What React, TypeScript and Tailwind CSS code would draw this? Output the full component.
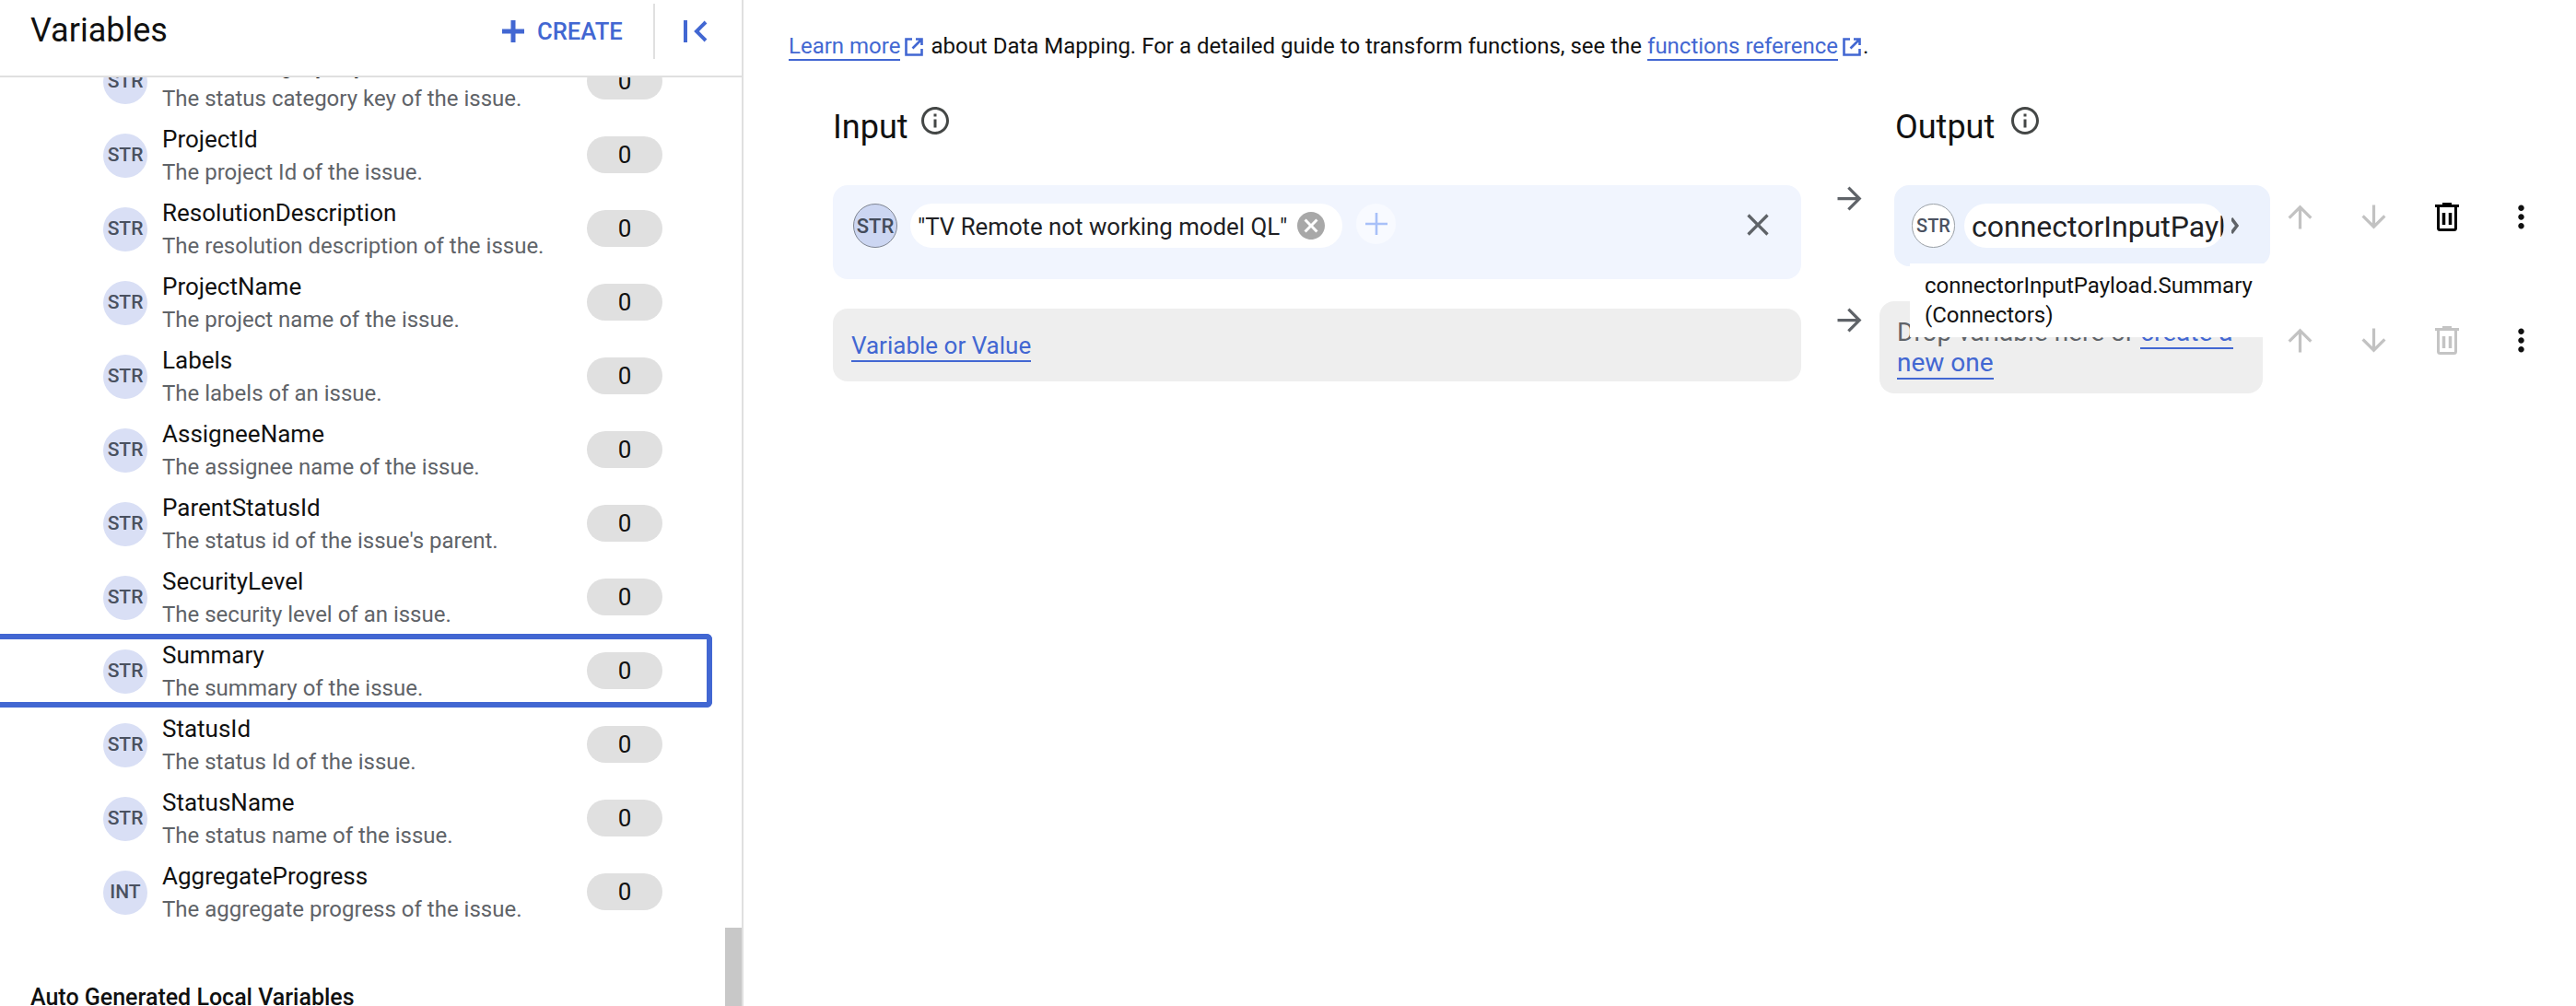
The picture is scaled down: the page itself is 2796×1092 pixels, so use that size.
import React from "react";
import { MdOutlineInfo, MdClose, MdCancel, MdMoreVert, MdArrowForward, MdArrowUpward, MdArrowDownward } from "react-icons/md";

const rows: [string, string, string][] = [
  ["STR", "StatusCategoryKey", "The status category key of the issue."],
  ["STR", "ProjectId", "The project Id of the issue."],
  ["STR", "ResolutionDescription", "The resolution description of the issue."],
  ["STR", "ProjectName", "The project name of the issue."],
  ["STR", "Labels", "The labels of an issue."],
  ["STR", "AssigneeName", "The assignee name of the issue."],
  ["STR", "ParentStatusId", "The status id of the issue's parent."],
  ["STR", "SecurityLevel", "The security level of an issue."],
  ["STR", "Summary", "The summary of the issue."],
  ["STR", "StatusId", "The status Id of the issue."],
  ["STR", "StatusName", "The status name of the issue."],
  ["INT", "AggregateProgress", "The aggregate progress of the issue."],
];

function Trash({ className }: { className: string }) {
  return (
    <svg viewBox="0 0 26 31" className={className} fill="none" stroke="currentColor">
      <path d="M0 3.5h26" strokeWidth="3" />
      <path d="M8 1.5h10" strokeWidth="3" />
      <path d="M3.5 4v23.5a2 2 0 0 0 2 2h15a2 2 0 0 0 2-2V4" strokeWidth="3" />
      <path d="M9.5 11v13M16.5 11v13" strokeWidth="3.5" />
    </svg>
  );
}

function Plus({ className }: { className: string }) {
  return (
    <svg viewBox="0 0 24 24" className={className} fill="currentColor">
      <path d="M9.5 0h5v9.5H24v5h-9.5V24h-5v-9.5H0v-5h9.5z" />
    </svg>
  );
}

function VarRow({ type, name, desc, focus }: { type: string; name: string; desc: string; focus: boolean }) {
  return (
    <div className="relative flex h-[80px] w-[773px] items-center pl-[112px]">
      <div className="mt-[1px] flex h-[48px] w-[48px] shrink-0 items-center justify-center rounded-full bg-[#d9dff5] text-[21px] font-medium text-[#4a5160]">
        {type}
      </div>
      <div className="ml-[16px] mt-[2px] w-[461px] shrink-0">
        <div className="text-[26px] leading-[36px] text-[#111111]">{name}</div>
        <div className="text-[24px] leading-[36px] text-[#5f6368]">{desc}</div>
      </div>
      <div className="flex h-[40px] w-[82px] shrink-0 items-center justify-center rounded-[20px] bg-[#e0e0e0] text-[26px] text-[#111111]">
        0
      </div>
      {focus && <div className="absolute inset-0 rounded-r-[6px] border-y-[6px] border-r-[6px] border-[#4267d2]" />}
    </div>
  );
}

function Ext() {
  return (
    <svg viewBox="0 0 20 20" className="mx-[5px] inline-block h-[20px] w-[20px] align-[-3px] text-[#4267d2]" fill="none" stroke="currentColor" strokeWidth="2.6">
      <path d="M8 1.5H1.5v17h17V12" />
      <path d="M12 1.5h6.5V8M18 2L8.5 11.5" />
    </svg>
  );
}

function IconColumn({ dim, h }: { dim: boolean; h: string }) {
  return (
    <div className={`flex ${h} items-center`}>
      <div className="flex w-[80px] justify-center text-[#c2c2c2]"><MdArrowUpward className="h-[39px] w-[39px]" /></div>
      <div className="flex w-[80px] justify-center text-[#c2c2c2]"><MdArrowDownward className="h-[39px] w-[39px]" /></div>
      <div className="flex w-[80px] justify-center">
        <Trash className={`h-[31px] w-[26px] ${dim ? "text-[#c4c4c4]" : "text-[#000000]"}`} />
      </div>
      <div className="flex w-[80px] justify-center text-[#111111]"><MdMoreVert className="h-[39px] w-[39px]" /></div>
    </div>
  );
}

export default function App() {
  return (
    <div className="flex h-[1092px] w-[2796px] overflow-hidden bg-white font-['Roboto',sans-serif]">
      <aside className="relative flex h-full w-[807px] shrink-0 flex-col overflow-hidden border-r-2 border-[#e0e0e0]">
        <header className="relative z-10 flex h-[84px] shrink-0 items-start border-b-[2px] border-[#e0e0e0] bg-white pl-[33px]">
          <h1 className="mt-[12px] w-[512px] text-[36px] leading-[42px] text-[#111111]">Variables</h1>
          <div className="mt-[22px] flex h-[24px] items-center text-[#4267d2]">
            <Plus className="h-[24px] w-[24px]" />
            <span className="ml-[14px] text-[25.6px] font-medium leading-[32px]">CREATE</span>
          </div>
          <div className="ml-[33px] mt-[4px] h-[60px] w-[2px] bg-[#e0e0e0]" />
          <svg viewBox="0 0 26 24" className="ml-[31px] mt-[22px] h-[24px] w-[26px] text-[#4267d2]" fill="none" stroke="currentColor" strokeWidth="4">
            <path d="M2 0v24" />
            <path d="M24 2L14 12l10 10" />
          </svg>
        </header>
        <div className="mt-[-36px] flex flex-col">
          {rows.map((r) => (
            <VarRow key={r[1]} type={r[0]} name={r[1]} desc={r[2]} focus={r[1] === "Summary"} />
          ))}
          <div className="ml-[33px] mt-[59px] text-[25px] font-medium leading-[32px] text-[#111111]">
            Auto Generated Local Variables
          </div>
        </div>
        <div className="absolute right-0 top-[1007px] h-[85px] w-[18px] bg-[#c8c8c8]" />
      </aside>

      <main className="relative min-w-0 flex-1 pl-[49px]">
        <p className="mt-[32px] text-[24px] leading-[36px] text-[#111111]">
          <a className="border-b-2 border-[#4267d2] text-[#4267d2]">Learn more</a>
          <Ext />
          <span className="ml-[3px]">about Data Mapping. For a detailed guide to transform functions, see the </span>
          <a className="border-b-2 border-[#4267d2] text-[#4267d2]">functions reference</a>
          <Ext />
          <span className="ml-[-3px]">.</span>
        </p>

        <div className="ml-[48px] mt-[47px] flex h-[46px] items-start">
          <div className="flex w-[1153px] items-start">
            <span className="text-[36px] leading-[46px] text-[#111111]">Input</span>
            <MdOutlineInfo className="ml-[11px] mt-[-2px] h-[36px] w-[36px] text-[#444746]" />
          </div>
          <div className="flex items-start">
            <span className="text-[36px] leading-[46px] text-[#111111]">Output</span>
            <MdOutlineInfo className="ml-[15px] mt-[-2px] h-[36px] w-[36px] text-[#444746]" />
          </div>
        </div>

        <div className="ml-[48px] mt-[40px] flex h-[126px] items-start">
          <div className="relative flex h-[102px] w-[1051px] shrink-0 items-start rounded-[16px] bg-[#f1f5fe] pl-[22px] pt-[20px]">
            <div className="flex h-[48px] w-[48px] shrink-0 items-center justify-center rounded-full border border-[#7f8592] bg-[#ccd6f2] text-[22px] font-medium text-[#444c5c]">STR</div>
            <div className="ml-[14px] flex h-[48px] w-[469px] shrink-0 items-center rounded-full bg-white pl-[8px]">
              <span className="mt-[2px] w-[412px] whitespace-nowrap text-[25.8px] text-[#202124]">"TV Remote not working model QL"</span>
              <MdCancel className="ml-[-3px] h-[36px] w-[36px] text-[#a8a8a8]" />
            </div>
            <div className="ml-[15px] flex h-[44px] w-[43px] items-center justify-center rounded-full bg-[#f8faff]">
              <svg viewBox="0 0 24 24" className="h-[24px] w-[24px] text-[#a8c0f8]" fill="none" stroke="currentColor" strokeWidth="2.6">
                <path d="M12 0v24M0 12h24" />
              </svg>
            </div>
            <MdClose className="ml-[373px] mt-[3px] h-[40px] w-[40px] text-[#5f6368]" />
          </div>
          <div className="w-[85px] shrink-0 pl-[33px]">
            <MdArrowForward className="mt-[-5px] h-[39px] w-[39px] text-[#5f6368]" />
          </div>
          <div className="w-[416px] shrink-0">
            <div className="ml-[16px] flex h-[88px] w-[408px] items-start rounded-[16px] bg-[#ecf2fd] pl-[19px] pt-[20px]">
              <div className="flex h-[48px] w-[47px] shrink-0 items-center justify-center rounded-full border border-[#9aa0a6] bg-white text-[20px] font-medium text-[#4a5160]">STR</div>
              <div className="ml-[10px] flex h-[48px] w-[282px] shrink-0 items-center overflow-hidden rounded-full bg-white pl-[8px]">
                <span className="mt-[2px] whitespace-nowrap text-[32px] text-[#202124]">connectorInputPayload.Summary</span>
              </div>
              <svg viewBox="0 0 8 20" className="ml-[8px] mt-[14px] h-[20px] w-[8px] text-[#5f6368]" fill="none" stroke="currentColor" strokeWidth="3.5">
                <path d="M0 2l6 8-6 8" />
              </svg>
            </div>
          </div>
          <IconColumn dim={false} h="h-[68px]" />
        </div>

        <div className="ml-[48px] flex items-start">
          <div className="mt-[8px] flex h-[79px] w-[1051px] shrink-0 items-center rounded-[16px] bg-[#eeeeee] pl-[20px] text-[26px] text-[#4267d2]">
            <a className="mt-[2px] border-b-2 border-[#4267d2] leading-[32px]">Variable or Value</a>
          </div>
          <div className="w-[85px] shrink-0 pl-[33px]">
            <MdArrowForward className="mt-[1px] h-[39px] w-[39px] text-[#5f6368]" />
          </div>
          <div className="h-[100px] w-[416px] shrink-0 rounded-[16px] bg-[#eeeeee] pl-[19px] pr-[14px] pt-[17px] text-[28px] leading-[33px] text-[#5f6368]">
            Drop variable here or <a className="border-b-2 border-[#4267d2] text-[#4267d2]">create a new one</a>
          </div>
          <IconColumn dim h="h-[84px]" />
        </div>

        <div className="absolute left-[1266px] top-[286px] h-[80px] w-[400px] bg-white pl-[16px] pt-[8px] text-[24px] leading-[32px] text-[#111111]">
          connectorInputPayload.Summary
          <br />
          (Connectors)
        </div>
      </main>
    </div>
  );
}
